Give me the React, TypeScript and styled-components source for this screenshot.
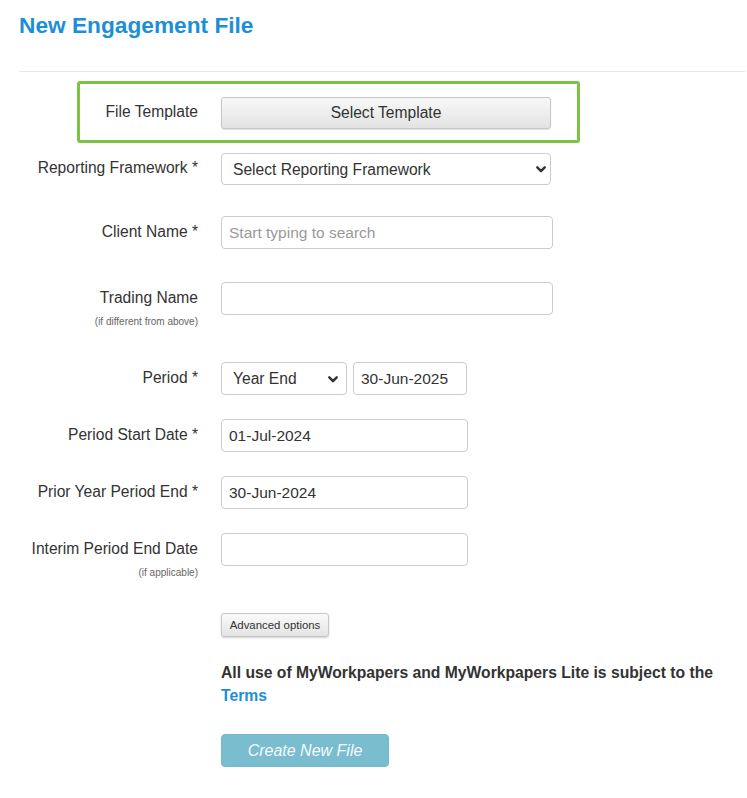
import React from "react";
import styled, { createGlobalStyle } from "styled-components";

const GlobalStyle = createGlobalStyle`
  html, body { margin: 0; padding: 0; background: #ffffff; }
  body {
    font-family: "Liberation Sans", Arial, Helvetica, sans-serif;
    color: #333333;
  }
  * { box-sizing: border-box; }
`;

const Page = styled.div`
  width: 747px;
  padding: 0 2px 30px 19px;
`;

const Title = styled.h1`
  margin: 0;
  padding-top: 12px;
  font-size: 22.7px;
  font-weight: 700;
  line-height: normal;
  color: #1c8fd6;
`;

const Divider = styled.hr`
  margin: 32px 0 0 0;
  border: 0;
  height: 1px;
  background: #e6e6e6;
`;

const Highlight = styled.div`
  margin: 9px 0 0 58px;
  width: 503px;
  border: 3px solid #7dc443;
  border-radius: 3px;
  padding: 13px 26px 11px 0;
`;

const Row = styled.div<{ $top?: number; $labelW?: number }>`
  display: grid;
  grid-template-columns: ${(p) => p.$labelW ?? 179}px auto;
  column-gap: 23px;
  align-items: start;
  margin-top: ${(p) => p.$top ?? 0}px;
`;

const LabelCell = styled.div<{ $pad?: number }>`
  display: flex;
  flex-direction: column;
  align-items: flex-end;
  text-align: right;
  padding-top: ${(p) => p.$pad ?? 7}px;
`;

const Label = styled.label`
  font-size: 15.6px;
  line-height: 18px;
  color: #333333;
  white-space: nowrap;
`;

const SubLabel = styled.span`
  margin-top: 9px;
  font-size: 10px;
  line-height: 12px;
  color: #666666;
  white-space: nowrap;
`;

const Controls = styled.div`
  display: flex;
  gap: 6px;
`;

const TemplateButton = styled.button`
  width: 330px;
  height: 32px;
  border: 1px solid #c6c6c6;
  border-radius: 3px;
  background: linear-gradient(#f8f8f8, #e3e3e3);
  box-shadow: 0 1px 1px rgba(0, 0, 0, 0.12);
  font-family: inherit;
  font-size: 15.6px;
  color: #333333;
  padding: 0;
  cursor: pointer;
`;

const SelectWrap = styled.div<{ $w: number }>`
  position: relative;
  width: ${(p) => p.$w}px;
`;

const Select = styled.select<{ $h?: number }>`
  appearance: none;
  -webkit-appearance: none;
  width: 100%;
  height: ${(p) => p.$h ?? 33}px;
  border: 1px solid #cccccc;
  border-radius: 4px;
  background: #ffffff;
  padding: 0 24px 0 11px;
  font-family: inherit;
  font-size: 15.6px;
  color: #333333;
  outline: none;
`;

const Chevron = styled.svg<{ $right: number }>`
  position: absolute;
  right: ${(p) => p.$right}px;
  top: 50%;
  margin-top: -3px;
  width: 10px;
  height: 7px;
  pointer-events: none;
`;

const TextInput = styled.input<{ $w: number }>`
  width: ${(p) => p.$w}px;
  height: 33px;
  border: 1px solid #cccccc;
  border-radius: 4px;
  background: #ffffff;
  padding: 0 7px;
  font-family: inherit;
  font-size: 15.5px;
  color: #333333;
  outline: none;
  &::placeholder {
    color: #999999;
  }
`;

const Footer = styled.div`
  margin-left: 202px;
  display: flex;
  flex-direction: column;
  align-items: flex-start;
`;

const SmallButton = styled.button`
  margin-top: 34px;
  width: 108px;
  height: 24px;
  border: 1px solid #c6c6c6;
  border-radius: 3px;
  background: linear-gradient(#fafafa, #e4e4e4);
  box-shadow: 0 1px 2px rgba(0, 0, 0, 0.18);
  font-family: inherit;
  font-size: 11.4px;
  color: #333333;
  padding: 0;
  cursor: pointer;
`;

const Terms = styled.p`
  margin: 24px 0 0 0;
  max-width: 505px;
  font-size: 15.7px;
  font-weight: 700;
  line-height: 23px;
  color: #333333;
`;

const Link = styled.a`
  color: #1c8fd6;
  text-decoration: none;
`;

const CreateButton = styled.button`
  margin-top: 27px;
  width: 168px;
  height: 33px;
  border: 1px solid #73b8cb;
  border-radius: 4px;
  background: #79bdcf;
  font-family: inherit;
  font-style: italic;
  font-size: 16px;
  color: #f4fafc;
  padding: 0;
`;

const ChevronIcon: React.FC<{ right: number }> = ({ right }) => (
  <Chevron $right={right} viewBox="0 0 10 7" aria-hidden="true">
    <path d="M1.3 1.3 L5 5.2 L8.7 1.3" fill="none" stroke="#333" strokeWidth="2.4" strokeLinecap="round" strokeLinejoin="round" />
  </Chevron>
);

export default function App() {
  return (
    <>
      <GlobalStyle />
      <Page>
        <Title>New Engagement File</Title>
        <Divider />

        <Highlight>
          <Row $labelW={118}>
            <LabelCell $pad={6}>
              <Label>File Template</Label>
            </LabelCell>
            <TemplateButton type="button">Select Template</TemplateButton>
          </Row>
        </Highlight>

        <Row $top={10}>
          <LabelCell $pad={6}>
            <Label>Reporting Framework *</Label>
          </LabelCell>
          <SelectWrap $w={330}>
            <Select $h={32} defaultValue="">
              <option value="">Select Reporting Framework</option>
            </Select>
            <ChevronIcon right={5} />
          </SelectWrap>
        </Row>

        <Row $top={31}>
          <LabelCell>
            <Label>Client Name *</Label>
          </LabelCell>
          <TextInput $w={332} placeholder="Start typing to search" />
        </Row>

        <Row $top={33}>
          <LabelCell>
            <Label>Trading Name</Label>
            <SubLabel>(if different from above)</SubLabel>
          </LabelCell>
          <TextInput $w={332} />
        </Row>

        <Row $top={34}>
          <LabelCell>
            <Label>Period *</Label>
          </LabelCell>
          <Controls>
            <SelectWrap $w={126}>
              <Select defaultValue="ye">
                <option value="ye">Year End</option>
              </Select>
              <ChevronIcon right={9} />
            </SelectWrap>
            <TextInput $w={114} defaultValue="30-Jun-2025" />
          </Controls>
        </Row>

        <Row $top={24}>
          <LabelCell>
            <Label>Period Start Date *</Label>
          </LabelCell>
          <TextInput $w={247} defaultValue="01-Jul-2024" />
        </Row>

        <Row $top={24}>
          <LabelCell>
            <Label>Prior Year Period End *</Label>
          </LabelCell>
          <TextInput $w={247} defaultValue="30-Jun-2024" />
        </Row>

        <Row $top={24}>
          <LabelCell>
            <Label>Interim Period End Date</Label>
            <SubLabel>(if applicable)</SubLabel>
          </LabelCell>
          <TextInput $w={247} />
        </Row>

        <Footer>
          <SmallButton type="button">Advanced options</SmallButton>
          <Terms>
            All use of MyWorkpapers and MyWorkpapers Lite is subject to the{" "}
            <Link href="#">Terms</Link>
          </Terms>
          <CreateButton type="button" disabled>
            Create New File
          </CreateButton>
        </Footer>
      </Page>
    </>
  );
}
